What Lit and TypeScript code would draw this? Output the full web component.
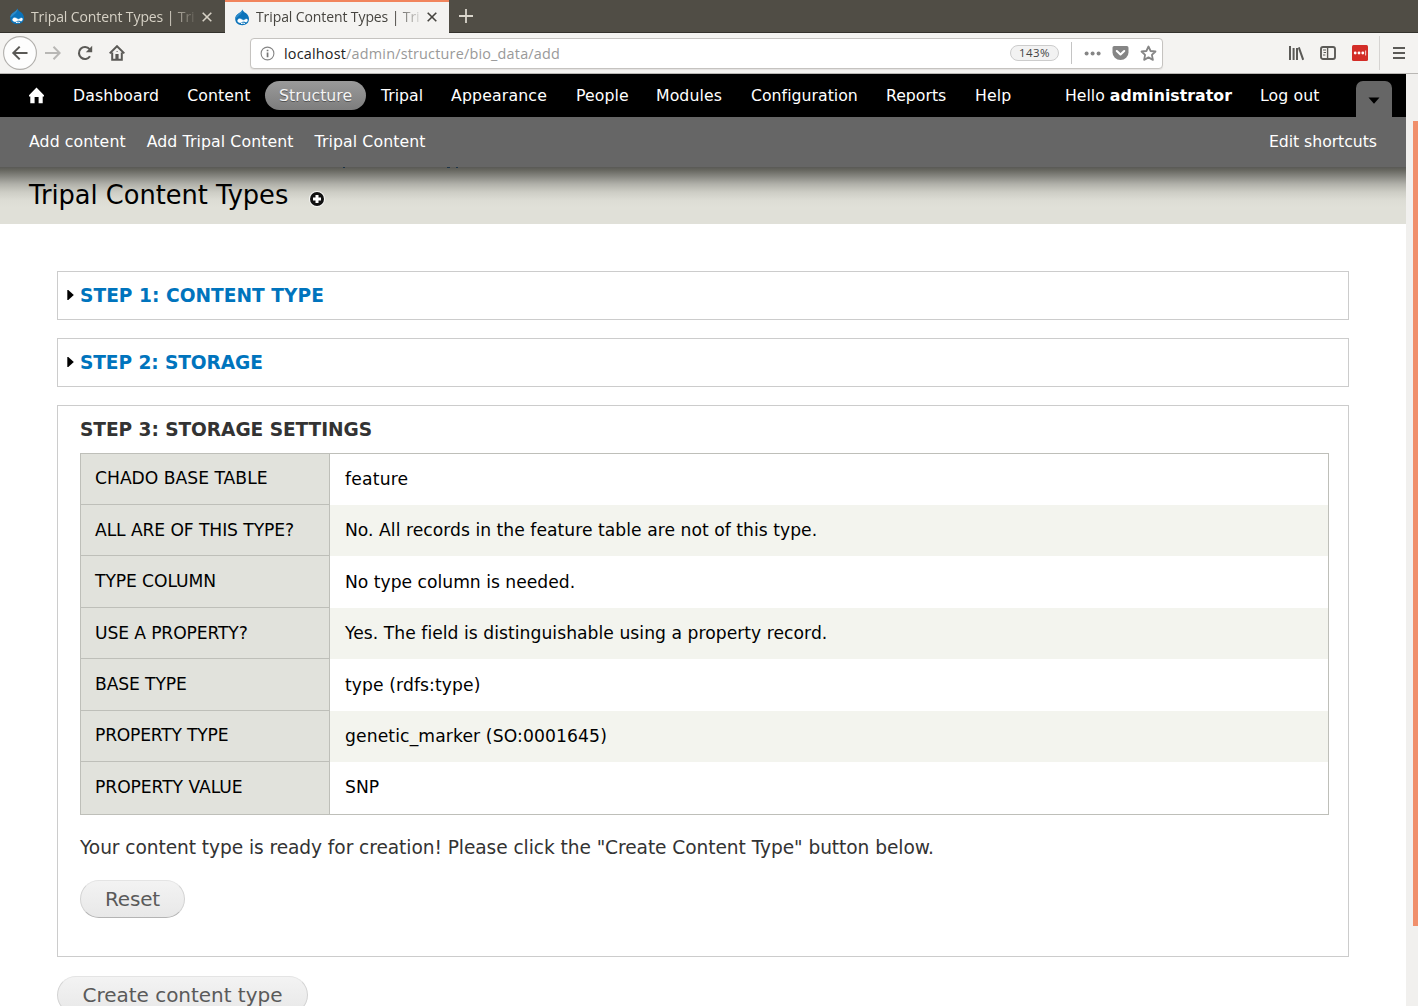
import { LitElement, html, css, svg } from "lit";
import { customElement, property } from "lit/decorators.js";
import { classMap } from "lit/directives/class-map.js";
import { styleMap } from "lit/directives/style-map.js";

const drop = svg`
  <path d="M8.4 .4C9 2.2 10.4 3 11.8 4.1C13.9 5.7 15 7.6 15 10C15 13.8 12 16.2 8.2 16.2C4.4 16.2 1.2 13.8 1.2 10C1.2 7.4 2.6 5.7 4.6 4.4C6.4 3.2 7.8 2.4 8.4 .4Z" fill="#0b73ba"/>
  <path d="M8.4 .6C7.8 2.4 6.4 3.2 4.6 4.4C2.6 5.7 1.4 7.4 1.3 9.4C3.4 8.6 4.6 6.8 6.4 5.4C7.6 4.4 8.8 3.4 8.4 .6Z" fill="#2f8cc9"/>
  <path d="M3.6 11.8C3.6 10.2 5.1 9.6 6.5 9.9C7.9 10.2 8.9 11.4 9.8 11.2C10.9 10.9 11.7 9.6 12.9 10.1C13.9 10.6 13.7 12.5 12.6 13C11.4 13.4 10.4 12.2 9.3 12.4C8 12.6 7.2 13.9 5.8 13.7C4.5 13.5 3.6 12.7 3.6 11.8Z" fill="#fff" stroke="#fff" stroke-width=".4"/>
  <path d="M7 14.7C8.4 14 9.8 14 11 14.6" stroke="#fff" stroke-width="1" fill="none"/>`;

@customElement("browser-tab")
class BrowserTab extends LitElement {
  @property({ type: Boolean, reflect: true }) active = false;
  static styles = css`
    :host { display: flex; box-sizing: border-box; width: 225px; height: 33px; padding: 0 0 0 9px; align-items: center; color: #d6d1c5; border-top: 1px solid #504d45; border-bottom: 1px solid #33312c; font: 14px/20px "Open Sans", sans-serif; letter-spacing: -0.1px; }
    :host([active]) { width: 224px; background: #f4f3f1; color: #46443f; border-bottom: 0; border-top: 2px solid #f1845c; padding-bottom: 1px; }
    .icon { width: 16px; height: 17px; margin-right: 6px; flex: none; }
    .label { width: 165px; flex: none; overflow: hidden; white-space: nowrap; -webkit-mask-image: linear-gradient(90deg, #000 138px, transparent 168px); mask-image: linear-gradient(90deg, #000 138px, transparent 168px); }
    .close { width: 10px; height: 10px; margin-left: 6px; flex: none; stroke: currentColor; stroke-width: 1.6; }
  `;
  render() {
    return html`<svg class="icon" viewBox="0 0 16 17">${drop}</svg>
      <span class="label">Tripal Content Types | Tri</span>
      <svg class="close" viewBox="0 0 10 10"><path d="M.7 .7L9.3 9.3M9.3 .7L.7 9.3"/></svg>`;
  }
}

@customElement("browser-bar")
class BrowserBar extends LitElement {
  static styles = css`
    :host { display: block; font-family: "Open Sans", sans-serif; }
    * { box-sizing: border-box; }
    svg { display: block; flex: none; }
    .tabs { display: flex; height: 33px; background: #504d45; box-shadow: inset 0 -1px #33312c; }
    .plus { width: 14px; height: 14px; margin: 9px 0 0 10px; stroke: #dad6cc; stroke-width: 1.8; }
    .bar { display: flex; align-items: center; height: 41px; background: #f4f3f1; border-bottom: 1px solid #b9b7b4; padding: 0 0 1px 2px; }
    .back { width: 36px; height: 36px; }
    .fwd { width: 16px; height: 16px; margin-left: 7px; }
    .reload { width: 16px; height: 16px; margin-left: 16px; }
    .home { width: 16px; height: 16px; margin-left: 16px; }
    .url { display: flex; align-items: center; width: 913px; height: 31px; margin: 1px 0 0 125px; padding-left: 9px; background: #fff; border: 1px solid #c5c3c0; border-radius: 4px; box-shadow: 0 1px 1px #e4e2e0; }
    .addr { flex: 1; margin-left: 9px; padding-top: 1px; font-size: 14.4px; line-height: 20px; letter-spacing: .2px; color: #999; }
    .addr b { color: #222; font-weight: 400; }
    .zoom { width: 49px; height: 16px; border: 1px solid #ccc; border-radius: 8px; background: #f2f2f2; color: #444; text-align: center; font: 11.5px/14px "Open Sans", sans-serif; letter-spacing: .4px; }
    .sep { width: 1px; height: 22px; background: #c4c4c4; margin: 0 12px; }
    .dots { width: 17px; height: 17px; }
    .pocket { width: 17px; height: 17px; margin-left: 11px; }
    .star { width: 17px; height: 17px; margin: 0 5px 0 11px; }
    .lib { width: 16px; height: 16px; margin-left: 125px; }
    .side { width: 16px; height: 16px; margin-left: 16px; }
    .pass { width: 16px; height: 16px; margin-left: 16px; }
    .bsep { width: 1px; height: 34px; background: #d6d4d2; margin: 0 13px 0 11px; }
    .menu { width: 12px; height: 16px; }
  `;
  render() {
    return html`
      <div class="tabs">
        <browser-tab></browser-tab><browser-tab active></browser-tab>
        <svg class="plus" viewBox="0 0 14 14"><path d="M7 0V14M0 7H14"/></svg>
      </div>
      <div class="bar">
        <svg class="back" viewBox="0 0 36 36"><circle cx="18" cy="18" r="16.4" fill="#fdfdfd" stroke="#b1afac" stroke-width="1.1"/><path d="M25.5 18H11.5M17.7 11.6L11.3 18L17.7 24.4" fill="none" stroke="#595855" stroke-width="2"/></svg>
        <svg class="fwd" viewBox="0 0 16 16"><path d="M0 8H14.5M8.5 1.8L14.7 8L8.5 14.2" fill="none" stroke="#b8b7b5" stroke-width="2"/></svg>
        <svg class="reload" viewBox="0 0 16 16"><path d="M13 11.3A6 6 0 1 1 12.6 4.2" fill="none" stroke="#5b5a57" stroke-width="2.1"/><path d="M15.2 .8V7.2H8.8Z" fill="#5b5a57"/></svg>
        <svg class="home" viewBox="0 0 16 16"><path d="M.7 8.4L8 1.2L15.3 8.4M3.2 7.5V14.7H12.8V7.5" fill="none" stroke="#5b5a57" stroke-width="2"/><path d="M6.4 9H9.6V15H6.4Z" fill="#5b5a57"/><path d="M7.6 6H8.6V7H7.6ZM8.2 11H9V12.4H8.2Z" fill="#5b5a57"/></svg>
        <div class="url">
          <svg width="15" height="15" viewBox="0 0 15 15"><circle cx="7.5" cy="7.5" r="6.4" fill="none" stroke="#858585" stroke-width="1.1"/><path d="M6.7 6.4H8.4V11.3H6.7ZM6.7 3.7H8.4V5.3H6.7Z" fill="#777"/></svg>
          <span class="addr"><b>localhost</b>/admin/structure/bio_data/add</span>
          <span class="zoom">143%</span>
          <i class="sep"></i>
          <svg class="dots" viewBox="0 0 17 17"><g fill="#858585"><circle cx="2.6" cy="8.5" r="2"/><circle cx="8.6" cy="8.5" r="2"/><circle cx="14.6" cy="8.5" r="2"/></g></svg>
          <svg class="pocket" viewBox="0 0 17 17"><path d="M2.2 1H14.8Q16.5 1 16.5 2.8V7.5A8 7.6 0 0 1 .5 7.5V2.8Q.5 1 2.2 1Z" fill="#858585"/><path d="M4.8 6L8.5 9.5L12.2 6" fill="none" stroke="#fff" stroke-width="2.1" stroke-linecap="round" stroke-linejoin="round"/></svg>
          <svg class="star" viewBox="0 0 17 17"><path d="M8.5 1.5L10.6 6L15.5 6.5L11.9 9.9L12.9 14.9L8.5 12.4L4.1 14.9L5.1 9.9L1.5 6.5L6.4 6Z" fill="none" stroke="#858585" stroke-width="1.8" stroke-linejoin="round"/></svg>
        </div>
        <svg class="lib" viewBox="0 0 16 16"><g fill="none" stroke="#5b5a57" stroke-width="2"><path d="M2 1V15M5.6 3V15M9 3V15M10.8 2.4L15.2 14.8"/></g></svg>
        <svg class="side" viewBox="0 0 16 16"><rect x="1" y="2" width="14" height="12" rx="2" fill="none" stroke="#5b5a57" stroke-width="1.9"/><path d="M7.6 2V14" stroke="#5b5a57" stroke-width="1.4"/><path d="M3 5H6M3.6 7.5H6M3 10H5.4" stroke="#5b5a57" stroke-width="1"/></svg>
        <svg class="pass" viewBox="0 0 16 16"><rect width="16" height="16" rx="1.5" fill="#d32d27"/><g fill="#fff"><circle cx="3.2" cy="8" r="1.4"/><circle cx="7" cy="8" r="1.4"/><circle cx="10.8" cy="8" r="1.4"/><path d="M13.3 5.5H14.1V10.5H13.3Z"/></g></svg>
        <i class="bsep"></i>
        <svg class="menu" viewBox="0 0 12 16"><path d="M0 3H12M0 8H12M0 13H12" stroke="#5b5a57" stroke-width="2"/></svg>
      </div>`;
  }
}

interface NavItem { label: string; width: number; spacing?: number; active?: boolean }

const NAV: NavItem[] = [
  { label: "Dashboard", width: 114.3, spacing: 0.1 },
  { label: "Content", width: 91.7, spacing: 0.08 },
  { label: "Structure", width: 101, active: true },
  { label: "Tripal", width: 70 },
  { label: "Appearance", width: 125, spacing: 0.16 },
  { label: "People", width: 80, spacing: 0.1 },
  { label: "Modules", width: 95, spacing: 0.1 },
  { label: "Configuration", width: 135, spacing: 0.02 },
  { label: "Reports", width: 89, spacing: 0 },
  { label: "Help", width: 70, spacing: 0.1 },
];

@customElement("admin-toolbar")
class AdminToolbar extends LitElement {
  static styles = css`
    :host { display: block; font: 15.73px/29px "DejaVu Sans", sans-serif; color: #fff; }
    * { box-sizing: border-box; }
    .top { display: flex; height: 43px; background: #000; padding: 7px 0 0 29px; white-space: nowrap; }
    .home { width: 15px; height: 17px; margin: 6px 15px 0 0; display: block; flex: none; }
    .item { height: 29px; flex: none; padding-left: 14px; }
    .active { border-radius: 15px; background: linear-gradient(#9a9a9a, #7d7d7d); text-shadow: 0 1px 0 #555; margin-right: 1px; color: #f4f4f4; }
    .hello { margin-left: 20px; width: 195px; flex: none; padding-left: 14px; }
    .hello b { letter-spacing: .05px; }
    .out { width: 96.5px; flex: none; padding-left: 14px; letter-spacing: .1px; }
    .toggle { width: 36px; height: 36px; margin-left: auto; margin-right: 14px; border-radius: 7px 7px 0 0; background: #666; display: grid; place-items: center; padding-top: 2px; }
    .bottom { display: flex; height: 50px; padding: 10px 29px 0 29px; background: #666; white-space: nowrap; gap: 21px; letter-spacing: .1px; }
    .edit { margin-left: auto; letter-spacing: -.05px; }
  `;
  render() {
    return html`
      <div class="top">
        <svg class="home" viewBox="0 0 15 17"><path d="M7.5 .4L15 8.2V9.4H13.7V16.2H9.6V10H5.6V16.2H1.3V9.4H0V8.2Z" fill="#fff"/></svg>
        ${NAV.map((n) => html`<span class=${classMap({ item: true, active: !!n.active })}
          style=${styleMap({ width: `${n.width}px`, letterSpacing: `${n.spacing ?? 0}px` })}>${n.label}</span>`)}
        <span class="hello">Hello <b>administrator</b></span>
        <span class="out">Log out</span>
        <span class="toggle"><svg width="12" height="8" viewBox="0 0 12 8"><path d="M.5 1.5H11.5L6 7.7Z" fill="#000"/></svg></span>
      </div>
      <div class="bottom">
        <span>Add content</span><span>Add Tripal Content</span><span>Tripal Content</span>
        <span class="edit">Edit shortcuts</span>
      </div>`;
  }
}

interface Row { name: string; value: string; height: number; nameTop: number; valueTop: number; ns?: number; vs?: number }

const ROWS: Row[] = [
  { name: "CHADO BASE TABLE", value: "feature", height: 51, nameTop: 12, valueTop: 13, vs: 0.2 },
  { name: "ALL ARE OF THIS TYPE?", value: "No. All records in the feature table are not of this type.", height: 51, nameTop: 13, valueTop: 13, ns: -0.1, vs: 0.035 },
  { name: "TYPE COLUMN", value: "No type column is needed.", height: 52, nameTop: 13, valueTop: 14, ns: -0.1 },
  { name: "USE A PROPERTY?", value: "Yes. The field is distinguishable using a property record.", height: 51, nameTop: 13, valueTop: 13, ns: -0.13, vs: 0.04 },
  { name: "BASE TYPE", value: "type (rdfs:type)", height: 52, nameTop: 13, valueTop: 14, ns: -0.12, vs: 0.1 },
  { name: "PROPERTY TYPE", value: "genetic_marker (SO:0001645)", height: 51, nameTop: 12, valueTop: 13, ns: -0.22, vs: 0.12 },
  { name: "PROPERTY VALUE", value: "SNP", height: 52, nameTop: 13, valueTop: 13, ns: -0.07 },
];

@customElement("settings-table")
class SettingsTable extends LitElement {
  static styles = css`
    :host { display: block; border: 1px solid #bebfb9; font: 17.16px/24px "DejaVu Sans", sans-serif; color: #000; }
    * { box-sizing: border-box; }
    .row { display: grid; grid-template-columns: 249px 1fr; }
    .row:nth-child(even) { background: #f3f4ee; }
    .name { background: #e1e2dc; border-right: 1px solid #bebfb9; border-bottom: 1px solid #bebfb9; padding-left: 14px; white-space: nowrap; }
    .row:last-child .name { border-bottom: 0; }
    .value { padding-left: 15px; }
  `;
  render() {
    return html`${ROWS.map((r) => html`<div class="row" style=${styleMap({ height: `${r.height}px` })}>
      <div class="name" style=${styleMap({ paddingTop: `${r.nameTop}px`, letterSpacing: `${r.ns ?? 0}px` })}>${r.name}</div>
      <div class="value" style=${styleMap({ paddingTop: `${r.valueTop}px`, letterSpacing: `${r.vs ?? 0}px` })}>${r.value}</div></div>`)}`;
  }
}

@customElement("app-root")
class AppRoot extends LitElement {
  static styles = css`
    :host { display: block; width: 1418px; height: 1006px; overflow: hidden; background: #fff; font-family: "DejaVu Sans", sans-serif; }
    * { box-sizing: border-box; }
    .view { display: flex; height: 932px; }
    .page { width: 1406px; height: 932px; overflow: hidden; }
    .scroll { width: 12px; background: #f1f0ee; padding: 47px 0 0 7px; }
    .thumb { height: 805px; background: #f08f6b; }
    .head { position: relative; display: flex; height: 57px; background: linear-gradient(#595955 0, #66665f 3px, #85857f 9px, #b0b0a9 17px, #cdcdc5 25px, #dcdcd4 33px, #e0e0d8 40px); padding: 12px 0 0 29px; }
    .tails { position: absolute; left: 342px; top: 0; width: 120px; height: 1px; }
    .title { margin: 0; font: 25.7px/32px "DejaVu Sans", sans-serif; letter-spacing: -.02px; color: #000; }
    .add { width: 16px; height: 16px; margin: 12px 0 0 20.5px; }
    .main { padding: 47px 57px 0; }
    .box { border: 1px solid #ccc; height: 49px; margin-bottom: 18px; display: flex; align-items: center; padding-left: 9px; font: bold 18.6px/24px "DejaVu Sans", sans-serif; color: #0074bd; }
    .box svg { margin: 0 6px 1px 0; }
    .one { letter-spacing: .03px; }
    .two { letter-spacing: -.1px; }
    .step { border: 1px solid #ccc; height: 552px; padding: 12px 19px 0 22px; color: #333; margin-bottom: 19px; }
    .legend { font: bold 18.6px/24px "DejaVu Sans", sans-serif; letter-spacing: -.07px; margin-bottom: 11px; }
    .note { font: 18.6px/24px "DejaVu Sans", sans-serif; letter-spacing: -.068px; margin: 21px 0 20px; }
    .btn { display: block; height: 38px; padding: 0 24px; border: 1px solid #e4e4e4; border-left-color: #d2d2d2; border-right-color: #d2d2d2; border-bottom-color: #b4b4b4; border-radius: 19px; background: linear-gradient(#f3f3f3, #e8e8e8); color: #5a5a5a; font: 20px/36px "DejaVu Sans", sans-serif; }
    .reset { width: 105px; letter-spacing: -.2px; }
    .create { width: 251px; letter-spacing: -.03px; }
  `;
  render() {
    const arrow = html`<svg width="7" height="10" viewBox="0 0 7 10"><path d="M.3 0H1.3L6.8 5L1.3 10H.3Z" fill="#000"/></svg>`;
    return html`
      <browser-bar></browser-bar>
      <div class="view">
        <div class="page">
          <admin-toolbar></admin-toolbar>
          <div class="head">
            <svg class="tails" viewBox="0 0 120 1"><path d="M1 0H3V1H1ZM105 0H108V1H105ZM114 0H116V1H114Z" fill="#1d3448"/></svg>
            <h1 class="title">Tripal Content Types</h1>
            <svg class="add" viewBox="0 0 16 16"><circle cx="8" cy="8" r="8" fill="#fff" opacity=".75"/><circle cx="8" cy="8" r="7" fill="#111"/><path d="M8 4V12M4 8H12" stroke="#fff" stroke-width="3"/></svg>
          </div>
          <div class="main">
            <div class="box">${arrow}<span class="one">STEP 1: CONTENT TYPE</span></div>
            <div class="box">${arrow}<span class="two">STEP 2: STORAGE</span></div>
            <div class="step">
              <div class="legend">STEP 3: STORAGE SETTINGS</div>
              <settings-table></settings-table>
              <div class="note">Your content type is ready for creation! Please click the "Create Content Type" button below.</div>
              <button class="btn reset">Reset</button>
            </div>
            <button class="btn create">Create content type</button>
          </div>
        </div>
        <div class="scroll"><div class="thumb"></div></div>
      </div>`;
  }
}
